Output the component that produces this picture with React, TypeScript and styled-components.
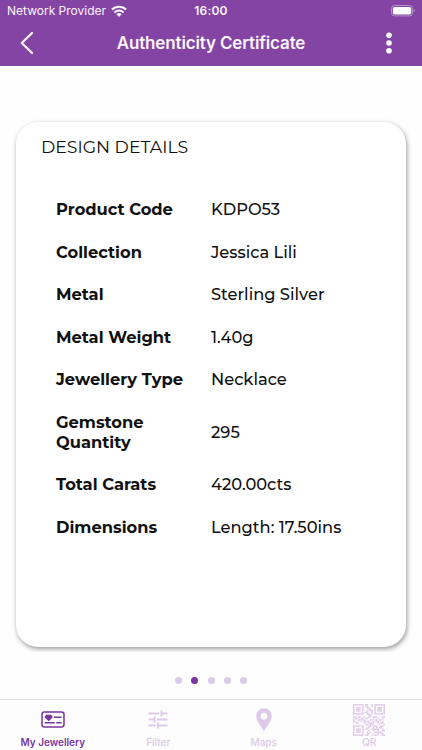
import React from 'react';
import styled, { createGlobalStyle } from 'styled-components';

const PURPLE = '#8344a4';
const ACTIVE = '#7a35a0';
const MUTED = '#dfc9e8';

const GlobalStyle = createGlobalStyle`
  *, *::before, *::after { box-sizing: border-box; }
  body { margin: 0; background: #fefefe; }
`;

const Screen = styled.div`
  display: flex;
  flex-direction: column;
  width: 422px;
  height: 750px;
  overflow: hidden;
  font-family: Montserrat, Inter, sans-serif;
  color: #111;
  background: #fefefe;
`;

const Header = styled.header`
  flex: none;
  height: 65.5px;
  color: #fbf5fd;
  background: ${PURPLE};
  font-family: Inter, sans-serif;
`;

const StatusBar = styled.div`
  display: grid;
  grid-template-columns: 1fr auto 1fr;
  align-items: center;
  height: 22px;
  padding: 0 7px;
  font-size: 12px;
  line-height: 22px;
`;

const Carrier = styled.div`
  display: flex;
  align-items: center;
  gap: 5px;
`;

const Clock = styled.span`
  font-weight: 600;
  letter-spacing: 0.2px;
`;

const Battery = styled.svg`
  justify-self: end;
`;

const NavBar = styled.div`
  display: grid;
  grid-template-columns: 60px 1fr 60px;
  align-items: center;
  height: 42px;
`;

const NavButton = styled.button<{ $side: 'left' | 'right' }>`
  display: flex;
  justify-content: ${p => (p.$side === 'left' ? 'flex-start' : 'flex-end')};
  padding: ${p => (p.$side === 'left' ? '0 0 0 18px' : '0 29px 0 0')};
  border: 0;
  color: inherit;
  background: none;
`;

const Title = styled.h1`
  margin: 0;
  text-align: center;
  font-size: 17px;
  font-weight: 600;
  line-height: 42px;
  letter-spacing: -0.15px;
  white-space: nowrap;
`;

const Page = styled.main`
  flex: none;
  height: 586.5px;
  padding: 56px 16px 0 15.5px;
  overflow: hidden;
`;

const Card = styled.section`
  height: 525px;
  padding: 14.5px 25px 0 25.5px;
  border-radius: 22px;
  background: #fff;
  box-shadow: 1px 2px 5px rgba(0, 0, 0, 0.4);
`;

const CardTitle = styled.h2`
  margin: 0;
  font-size: 17.3px;
  font-weight: 400;
  line-height: 22px;
`;

const Details = styled.dl`
  margin: 31px 0 0 15px;
`;

const Row = styled.div`
  display: grid;
  grid-template-columns: 155px 1fr;
  align-items: center;
  padding: 11.3px 0;
  font-size: 16.3px;
  line-height: 19.9px;
`;

const Term = styled.dt`
  max-width: 135px;
  font-weight: 700;
`;

const Value = styled.dd`
  margin: 0;
  font-weight: 500;
  white-space: nowrap;
`;

const Pager = styled.div`
  flex: none;
  display: flex;
  align-items: center;
  justify-content: center;
  gap: 9.3px;
  height: 47px;
  padding-top: 10px;
`;

const Dot = styled.span<{ $active?: boolean }>`
  width: 7px;
  height: 7px;
  border-radius: 50%;
  background: ${p => (p.$active ? ACTIVE : MUTED)};
`;

const TabBar = styled.nav`
  flex: 1;
  display: grid;
  grid-template-columns: repeat(4, 1fr);
  border-top: 1px solid #dcdbdd;
  background: #fdfdfd;
  font-family: Inter, sans-serif;
`;

const Tab = styled.a<{ $active?: boolean }>`
  display: flex;
  flex-direction: column;
  align-items: center;
  color: ${p => (p.$active ? ACTIVE : MUTED)};
  font-size: 10px;
  font-weight: ${p => (p.$active ? 600 : 500)};
  line-height: 12px;
`;

const TabIcon = styled.span`
  display: flex;
  align-items: center;
  justify-content: center;
  height: 36px;
  padding-top: 3px;
`;

const DETAILS = [
  { label: 'Product Code', value: 'KDPO53' },
  { label: 'Collection', value: 'Jessica Lili' },
  { label: 'Metal', value: 'Sterling Silver' },
  { label: 'Metal Weight', value: '1.40g' },
  { label: 'Jewellery Type', value: 'Necklace' },
  { label: 'Gemstone Quantity', value: '295' },
  { label: 'Total Carats', value: '420.00cts' },
  { label: 'Dimensions', value: 'Length: 17.50ins' },
];

const QR_ROWS = [
  '111111101100101111111',
  '100000101100101000001',
  '101110100110001011101',
  '101110100011001011101',
  '101110100101101011101',
  '100000101100101000001',
  '111111100110101111111',
  '000000000011000000000',
  '110110010011011100011',
  '011001101100010010010',
  '100110110001101101100',
  '110001011110010110010',
  '001100010011110010110',
  '000000001101100001001',
  '111111100011011100110',
  '100000100110010101100',
  '101110101100111110010',
  '101110100010010010011',
  '101110100101001111100',
  '100000100110010010110',
  '111111101100101100011',
];

const WifiIcon = () => (
  <svg width="16" height="12" viewBox="0 0 16 12" fill="none" stroke="currentColor" strokeWidth="2.1">
    <path d="M0.9 4.6a10.2 10.2 0 0 1 14.2 0M3.4 7.4a6.6 6.6 0 0 1 9.2 0" />
    <path d="M5.4 9.3a3.8 3.8 0 0 1 5.2 0L8 11.9Z" fill="currentColor" stroke="none" />
  </svg>
);

const BatteryIcon = () => (
  <Battery width="24" height="12" viewBox="0 0 24 12">
    <rect x="0.5" y="0.5" width="21" height="10.4" rx="3" fill="none" stroke="#b992cb" />
    <rect x="1.9" y="1.9" width="18.3" height="7.6" rx="1.7" fill="#fff" />
    <path d="M22.7 4q1.2.6 1.2 1.8t-1.2 1.8Z" fill="#b992cb" />
  </Battery>
);

const BackIcon = () => (
  <svg width="17" height="24" viewBox="0 0 17 24" fill="none" stroke="currentColor" strokeWidth="2.2" strokeLinecap="round" strokeLinejoin="round">
    <path d="M14 2 3.8 12 14 22" />
  </svg>
);

const MoreIcon = () => (
  <svg width="8" height="24" viewBox="0 0 8 24" fill="#fff">
    <circle cx="4" cy="4.3" r="2.8" />
    <circle cx="4" cy="12" r="2.8" />
    <circle cx="4" cy="19.7" r="2.8" />
  </svg>
);

const CardIcon = () => (
  <svg width="24" height="17" viewBox="0 0 24 17" fill="none" stroke="currentColor" strokeWidth="1.5">
    <rect x="1" y="1" width="22" height="15" rx="2.4" />
    <path d="M13 6.2h7.5M3.7 11.8h10M15.3 11.8h5.2" />
    <path d="M5 3.7h5.2L11.8 6.2 7.7 10.3 3.5 6.2Z" fill="currentColor" stroke="none" />
  </svg>
);

const TuneIcon = () => (
  <svg width="20" height="19" viewBox="0 0 20 19" fill="none" stroke="currentColor" strokeWidth="1.9">
    <path d="M.5 3.5h10.500M13.500 0.500v6M13.500 3.500h6M.5 9.500h6M6.500 6.500v6M9 9.500h10.500M.5 15.500h7M10 12.500v6M10 15.500h9.500" />
  </svg>
);

const PinIcon = () => (
  <svg width="16" height="24" viewBox="0 0 16 24" fill="currentColor">
    <path fillRule="evenodd" d="M8 .3A7.8 7.8 0 0 0 .2 8.1C.2 13.2 5.2 18 8 23.7c2.8-5.7 7.8-10.5 7.8-15.6A7.8 7.8 0 0 0 8 .3Zm0 4.5a3.4 3.4 0 1 1 0 6.8a3.4 3.4 0 0 1 0-6.8Z" />
  </svg>
);

const QrIcon = () => (
  <svg width="32" height="32" viewBox="0 0 21 21" fill="currentColor">
    {QR_ROWS.map((row, y) =>
      [...row].map((bit, x) => (bit === '1' ? <rect key={`${x}-${y}`} x={x} y={y} width="1.02" height="1.02" /> : null)),
    )}
  </svg>
);

const TABS = [
  { label: 'My Jewellery', icon: <CardIcon />, active: true },
  { label: 'Filter', icon: <TuneIcon /> },
  { label: 'Maps', icon: <PinIcon /> },
  { label: 'QR', icon: <QrIcon /> },
];

export default function App() {
  return (
    <>
      <GlobalStyle />
      <Screen>
        <Header>
          <StatusBar>
            <Carrier>
              <span>Network Provider</span>
              <WifiIcon />
            </Carrier>
            <Clock>16:00</Clock>
            <BatteryIcon />
          </StatusBar>
          <NavBar>
            <NavButton $side="left" aria-label="Back"><BackIcon /></NavButton>
            <Title>Authenticity Certificate</Title>
            <NavButton $side="right" aria-label="More"><MoreIcon /></NavButton>
          </NavBar>
        </Header>
        <Page>
          <Card>
            <CardTitle>DESIGN DETAILS</CardTitle>
            <Details>
              {DETAILS.map(({ label, value }) => (
                <Row key={label}>
                  <Term>{label}</Term>
                  <Value>{value}</Value>
                </Row>
              ))}
            </Details>
          </Card>
        </Page>
        <Pager>
          {[0, 1, 2, 3, 4].map(i => <Dot key={i} $active={i === 1} />)}
        </Pager>
        <TabBar>
          {TABS.map(tab => (
            <Tab key={tab.label} $active={tab.active}>
              <TabIcon>{tab.icon}</TabIcon>
              {tab.label}
            </Tab>
          ))}
        </TabBar>
      </Screen>
    </>
  );
}
